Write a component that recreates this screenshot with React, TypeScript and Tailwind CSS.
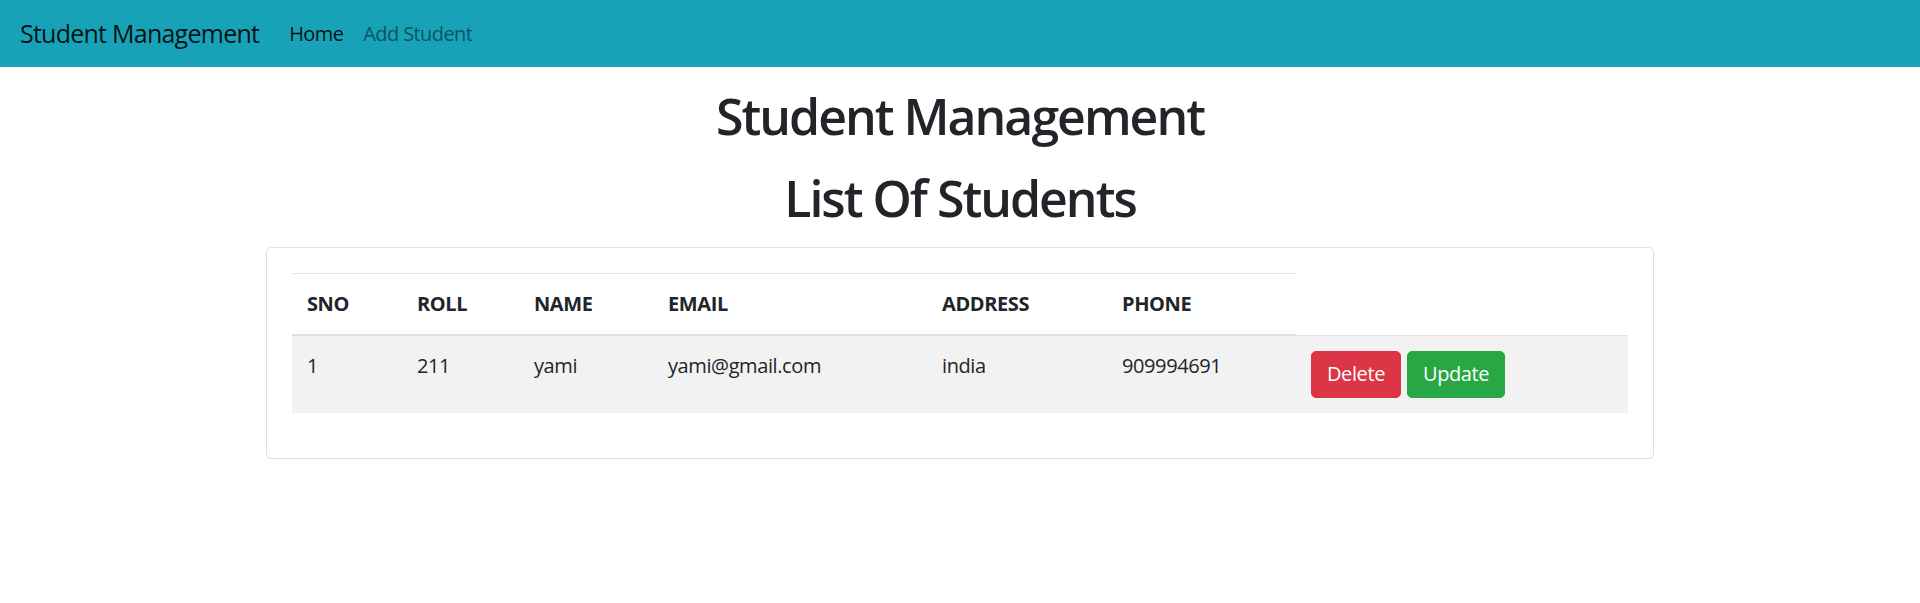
import React from "react";

const students = [
  { sno: 1, roll: 211, name: "yami", email: "yami@gmail.com", address: "india", phone: "909994691" },
];

export default function App() {
  return (
    <div className="min-h-screen bg-white text-[#212529] font-['Open_Sans',sans-serif]">
      <nav className="h-[67px] bg-[#17a2b8] px-5 flex items-center">
        <span className="text-[25px] leading-[37px] text-black/90 mr-5 tracking-[-0.03em]">Student Management</span>
        <a className="px-[10px] text-[20px] leading-[30px] text-black/90 tracking-[-0.03em]">Home</a>
        <a className="px-[10px] text-[20px] leading-[30px] text-black/50 tracking-[-0.03em]">Add Student</a>
      </nav>

      <h1 className="mt-[19px] text-center text-[50px] leading-[60px] font-semibold tracking-[-0.04em]">
        Student Management
      </h1>
      <h1 className="mt-[22px] text-center text-[50px] leading-[60px] font-semibold tracking-[-0.04em]">
        List Of Students
      </h1>

      <div className="mx-auto mt-[19px] w-[1388px] border border-[#dfdfdf] rounded-[5px] p-[25px] pb-[45px]">
        <table className="w-full table-fixed text-[20px] leading-[30px] tracking-[-0.02em]">
          <thead>
            <tr>
              <th className="w-[110px] p-[15px] text-left font-bold border-t border-b-2 border-[#dee2e6] align-bottom">SNO</th>
              <th className="w-[117px] p-[15px] text-left font-bold border-t border-b-2 border-[#dee2e6] align-bottom">ROLL</th>
              <th className="w-[134px] p-[15px] text-left font-bold border-t border-b-2 border-[#dee2e6] align-bottom">NAME</th>
              <th className="w-[274px] p-[15px] text-left font-bold border-t border-b-2 border-[#dee2e6] align-bottom">EMAIL</th>
              <th className="w-[180px] p-[15px] text-left font-bold border-t border-b-2 border-[#dee2e6] align-bottom">ADDRESS</th>
              <th className="w-[189px] p-[15px] text-left font-bold border-t border-b-2 border-[#dee2e6] align-bottom">PHONE</th>
            </tr>
          </thead>
          <tbody>
            {students.map((s) => (
              <tr key={s.sno} className="bg-[#f2f2f2]">
                <td className="p-[15px] align-top border-t border-[#dee2e6]">{s.sno}</td>
                <td className="p-[15px] align-top border-t border-[#dee2e6]">{s.roll}</td>
                <td className="p-[15px] align-top border-t border-[#dee2e6]">{s.name}</td>
                <td className="p-[15px] align-top border-t border-[#dee2e6]">{s.email}</td>
                <td className="p-[15px] align-top border-t border-[#dee2e6]">{s.address}</td>
                <td className="p-[15px] align-top border-t border-[#dee2e6]">{s.phone}</td>
                <td className="p-[15px] align-top border-t border-[#dee2e6]">
                  <div className="flex gap-[6px]">
                    <button className="px-[15px] py-[7.5px] border border-[#dc3545] bg-[#dc3545] rounded-[5px] text-white text-[20px] leading-[30px]">
                      Delete
                    </button>
                    <button className="px-[15px] py-[7.5px] border border-[#28a745] bg-[#28a745] rounded-[5px] text-white text-[20px] leading-[30px]">
                      Update
                    </button>
                  </div>
                </td>
              </tr>
            ))}
          </tbody>
        </table>
      </div>
    </div>
  );
}
